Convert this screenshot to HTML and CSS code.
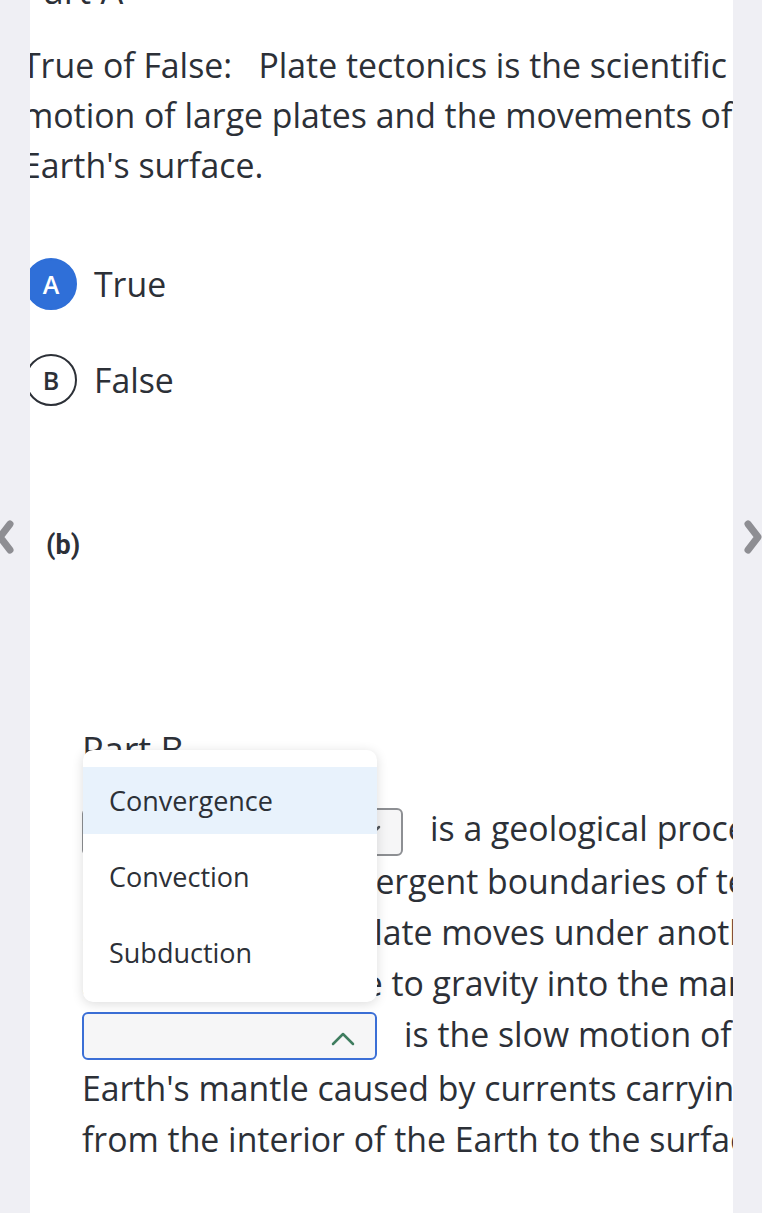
FILE: index.html
```html
<!DOCTYPE html>
<html lang="en">
<head>
  <meta charset="UTF-8" />
  <meta name="viewport" content="width=device-width, initial-scale=1.0" />
  <title>Plate Tectonics – Quiz</title>
  <link rel="stylesheet" href="styles.css">
</head>
<body>
  <a class="nav nav-prev" href="#" aria-label="Previous">
    <svg width="20" height="40" viewBox="0 0 20 40"><polyline points="12,6 2,19 12,32" /></svg>
  </a>

  <div class="panel">
    <section class="part part-a">
      <h2 class="part-title">Part A</h2>
      <p class="question">True of False:&nbsp;&nbsp; Plate tectonics is the scientific<br>motion of large plates and the movements of<br>Earth's surface.</p>

      <ul class="choices">
        <li class="choice selected"><span class="letter">A</span><span>True</span></li>
        <li class="choice"><span class="letter">B</span><span>False</span></li>
      </ul>
    </section>

    <div class="sub-label">(b)</div>

    <section class="part part-b">
      <h2 class="part-title">Part B</h2>
      <div class="fill">
        <span class="dropdown wide">
          <svg width="24" height="14" viewBox="0 0 24 14"><polyline points="2,2 12,12 22,2" /></svg>
        </span>is a geological process that occurs<br>
        usually at the convergent boundaries of tectonic plates, in<br>
        areas where one plate moves under another<br>
        and so it sinks, due to gravity into the mantle.<br>
        <span class="dropdown open">
          <span class="menu">
            <span class="option active">Convergence</span>
            <span class="option">Convection</span>
            <span class="option">Subduction</span>
          </span>
          <svg width="24" height="14" viewBox="0 0 24 14"><polyline points="2,12 12,2 22,12" /></svg>
        </span>is the slow motion of the<br>
        Earth's mantle caused by currents carrying heat<br>
        from the interior of the Earth to the surface.
      </div>
    </section>
  </div>

  <a class="nav nav-next" href="#" aria-label="Next">
    <svg width="20" height="40" viewBox="0 0 20 40"><polyline points="4,6 14,19 4,32" /></svg>
  </a>
</body>
</html>
```

FILE: styles.css
```css
* {
  box-sizing: border-box;
}
body {
  margin: 0;
  background: #efeff4;
  font-family: 'Open Sans', sans-serif;
  color: #2c3037;
}
.panel {
  width: 703px;
  height: 1213px;
  margin-left: 30px;
  background: #ffffff;
  overflow: hidden;
}
.part-title {
  margin: 0;
  font-size: 36px;
  font-weight: 400;
  line-height: 44px;
  white-space: nowrap;
}
.part-a {
  margin-left: -8px;
}
.part-a .part-title {
  margin-top: -31px;
}
.question {
  margin: 27px 0 0;
  font-size: 33.8px;
  line-height: 50px;
  white-space: nowrap;
}
.choices {
  list-style: none;
  margin: 68px 0 0;
  padding: 0 0 0 3px;
}
.choice {
  display: flex;
  align-items: center;
  gap: 17px;
  height: 52px;
  font-size: 33.8px;
  line-height: 50px;
}
.choice + .choice {
  margin-top: 44px;
}
.letter {
  width: 52px;
  height: 52px;
  border-radius: 50%;
  border: 2px solid #2c3037;
  display: flex;
  align-items: center;
  justify-content: center;
  font-size: 25px;
  font-weight: 600;
  line-height: 1;
}
.choice.selected .letter {
  background: #2f6fd8;
  border-color: #2f6fd8;
  color: #fff;
}
.sub-label {
  margin: 123px 0 0 16px;
  font-family: Roboto, 'Liberation Sans', sans-serif;
  font-weight: 700;
  font-size: 27px;
  line-height: 32px;
}
.part-b {
  margin-left: 52px;
}
.part-b .part-title {
  margin-top: 167px;
}
.fill {
  margin: 31px 0 0;
  font-size: 33.8px;
  line-height: 51px;
  white-space: nowrap;
}
.dropdown {
  position: relative;
  display: inline-flex;
  align-items: center;
  justify-content: flex-end;
  vertical-align: middle;
  height: 48px;
  margin-right: 27px;
  padding-right: 20px;
  border: 2px solid #8d8f93;
  border-radius: 6px;
  background: #f6f6f7;
}
.dropdown svg polyline {
  fill: none;
  stroke: #55595f;
  stroke-width: 2.5;
  stroke-linecap: round;
  stroke-linejoin: round;
}
.dropdown.wide {
  width: 321px;
}
.dropdown.open {
  width: 295px;
  margin-bottom: 3px;
  border-color: #3b6fd6;
}
.dropdown.open svg {
  margin-top: 5px;
}
.dropdown.open svg polyline {
  stroke: #3f7d5f;
}
.menu {
  position: absolute;
  left: -1px;
  bottom: calc(100% + 12px);
  z-index: 2;
  display: flex;
  flex-direction: column;
  gap: 9px;
  width: 294px;
  padding: 17px 0 16px;
  background: #fff;
  border-radius: 10px;
  box-shadow: 0 2px 12px rgba(0, 0, 0, 0.14);
  font-size: 27px;
  line-height: normal;
}
.option {
  display: flex;
  align-items: center;
  height: 67px;
  padding-left: 26px;
}
.option.active {
  background: #e8f2fc;
}
.nav {
  position: fixed;
  top: 518px;
  width: 20px;
  height: 40px;
}
.nav-prev {
  left: -2px;
}
.nav-next {
  right: -2px;
}
.nav svg polyline {
  fill: none;
  stroke: #8e8e93;
  stroke-width: 7;
  stroke-linecap: round;
  stroke-linejoin: round;
}
```
